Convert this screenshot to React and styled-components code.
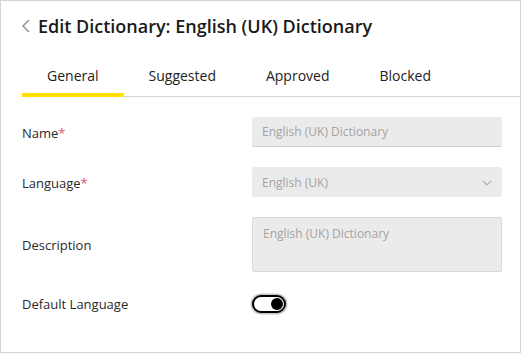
import React from "react";
import styled, { createGlobalStyle } from "styled-components";

const Global = createGlobalStyle`
  html, body { margin: 0; padding: 0; background: #fff; }
  body { font-family: "Open Sans", "Noto Sans", sans-serif; }
  * { box-sizing: border-box; }
`;

const Frame = styled.div`
  width: 521px;
  height: 353px;
  border: 1px solid #d4d4d4;
  padding-left: 21px;
  display: flex;
  flex-direction: column;
  background: #fff;
`;

const Header = styled.div`
  display: flex;
  align-items: center;
  gap: 8px;
  margin-top: 13px;
  height: 24px;
`;

const Back = styled.button`
  border: 0;
  background: none;
  padding: 0;
  display: flex;
  align-items: center;
  cursor: pointer;
`;

const Title = styled.h1`
  margin: 0;
  font-size: 18px;
  line-height: 24px;
  font-weight: 600;
  color: #1a1a1a;
`;

const TabBar = styled.div`
  display: flex;
  margin-top: 17px;
  border-bottom: 1px solid #d6d6d6;
`;

const Tab = styled.div`
  padding: 11px 25px 7px;
  font-size: 14px;
  line-height: 20px;
  color: #222;
  margin-bottom: -1px;
  border-bottom: 4px solid ${(p) => (p.$active ? "#ffe000" : "transparent")};
  cursor: pointer;
`;

const Form = styled.div`
  display: grid;
  grid-template-columns: 230px 250px;
  row-gap: 20px;
  align-items: center;
  padding-top: 20px;
`;

const Label = styled.div`
  font-size: 13px;
  color: #2a2a2a;
  line-height: 18px;
  padding-top: 1px;
`;

const Req = styled.span`
  color: #e2506c;
`;

const Field = styled.div`
  height: ${(p) => p.$h || 30}px;
  background: #ebebeb;
  border-radius: 2px;
  border: ${(p) => (p.$boxed ? "1px solid #d9d9d9" : "0")};
  border-bottom: ${(p) => (p.$underline ? "1px solid #cfcfcf" : p.$boxed ? "1px solid #d9d9d9" : "0")};
  display: flex;
  align-items: ${(p) => (p.$top ? "flex-start" : "center")};
  justify-content: space-between;
  padding: ${(p) => (p.$top ? "7px 10px" : "1px 10px 0")};
  font-size: 12px;
  color: #a3a3a3;
  line-height: 18px;
`;

const ToggleSlot = styled.div`
  padding: 3px 0 1px;
`;

const ToggleTrack = styled.div`
  width: 34px;
  height: 18px;
  border: 2px solid #000;
  border-radius: 9px;
  background: #fff;
  box-shadow: 0 0 0 1.5px #c4c4c4;
  display: flex;
  align-items: center;
  justify-content: flex-end;
  padding-right: 1px;
`;

const Knob = styled.div`
  width: 12px;
  height: 12px;
  border-radius: 50%;
  background: #000;
`;

const Chevron = () => (
  <svg width="10" height="6" viewBox="0 0 10 6">
    <path d="M1 1 L5 5 L9 1" fill="none" stroke="#b0b0b0" strokeWidth="1.2" />
  </svg>
);

export default function App() {
  return (
    <>
      <Global />
      <Frame>
        <Header>
          <Back aria-label="Back">
            <svg width="8" height="14" viewBox="0 0 8 14">
              <path d="M7 1 L1 7 L7 13" fill="none" stroke="#8a8a8a" strokeWidth="1.4" />
            </svg>
          </Back>
          <Title>Edit Dictionary: English (UK) Dictionary</Title>
        </Header>
        <TabBar>
          <Tab $active>General</Tab>
          <Tab>Suggested</Tab>
          <Tab>Approved</Tab>
          <Tab>Blocked</Tab>
        </TabBar>
        <Form>
          <Label>
            Name<Req>*</Req>
          </Label>
          <Field $underline>English (UK) Dictionary</Field>
          <Label>
            Language<Req>*</Req>
          </Label>
          <Field>
            <span>English (UK)</span>
            <Chevron />
          </Field>
          <Label>Description</Label>
          <Field $h={55} $boxed $top>
            English (UK) Dictionary
          </Field>
          <Label>Default Language</Label>
          <ToggleSlot>
            <ToggleTrack>
              <Knob />
            </ToggleTrack>
          </ToggleSlot>
        </Form>
      </Frame>
    </>
  );
}
